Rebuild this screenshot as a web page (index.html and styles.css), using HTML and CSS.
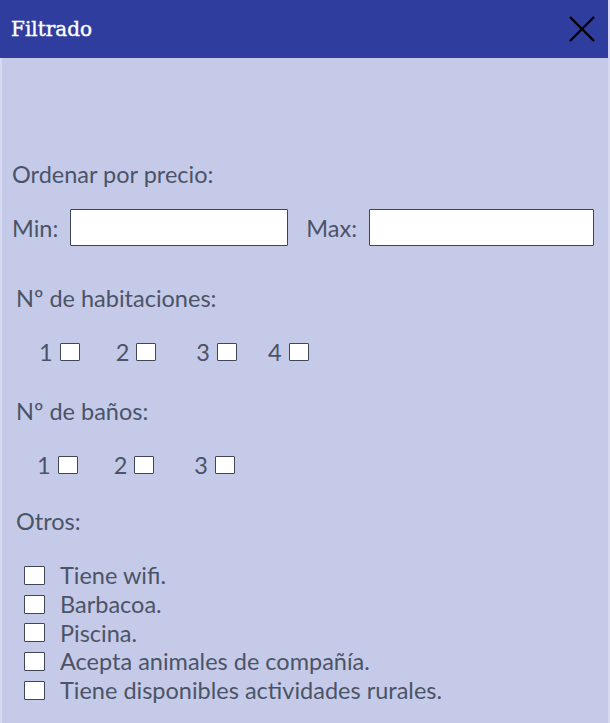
FILE: index.html
```html
<!DOCTYPE html>
<html lang="es">
<head>
    <meta charset="UTF-8">
    <meta name="viewport" content="width=device-width, initial-scale=1.0">
    <title>Filtrado</title>
    <link rel="stylesheet" href="styles.css">
</head>
<body>
    <div class="filter-panel">
        <div class="panel-header">
            <h1>Filtrado</h1>
            <button class="close-btn" aria-label="Cerrar">
                <svg width="26" height="26" viewBox="0 0 26 26">
                    <path d="M1 1 L25 25 M25 1 L1 25" stroke="#000" stroke-width="2.4" fill="none"/>
                </svg>
            </button>
        </div>

        <div class="panel-body">
            <p class="section-title">Ordenar por precio:</p>
            <div class="price-row">
                <label for="min-price">Min:</label>
                <input type="text" id="min-price" class="price-input min">
                <label for="max-price" class="max-label">Max:</label>
                <input type="text" id="max-price" class="price-input max">
            </div>

            <p class="section-title indent rooms-title">Nº de habitaciones:</p>
            <div class="num-row rooms">
                <label class="num-option">1<input type="checkbox"></label>
                <label class="num-option">2<input type="checkbox"></label>
                <label class="num-option">3<input type="checkbox"></label>
                <label class="num-option">4<input type="checkbox"></label>
            </div>

            <p class="section-title indent baths-title">Nº de baños:</p>
            <div class="num-row baths">
                <label class="num-option">1<input type="checkbox"></label>
                <label class="num-option">2<input type="checkbox"></label>
                <label class="num-option">3<input type="checkbox"></label>
            </div>

            <p class="section-title indent others-title">Otros:</p>
            <ul class="others-list">
                <li><label><input type="checkbox"> Tiene wifi.</label></li>
                <li><label><input type="checkbox"> Barbacoa.</label></li>
                <li><label><input type="checkbox"> Piscina.</label></li>
                <li><label><input type="checkbox"> Acepta animales de compañía.</label></li>
                <li><label><input type="checkbox"> Tiene disponibles actividades rurales.</label></li>
            </ul>
        </div>
    </div>
</body>
</html>
```

FILE: styles.css
```css
html {
    background: #d6d9ef;
}
body {
    margin: 0;
    padding: 0;
    font-family: Lato, "Open Sans", sans-serif;
    color: #4b5466;
}
.filter-panel {
    width: 608px;
    height: 723px;
    display: flex;
    flex-direction: column;
}
.panel-header {
    height: 58px;
    background: #2f3d9f;
    display: flex;
    align-items: center;
    justify-content: space-between;
    padding: 0 13px 0 11px;
}
.panel-header h1 {
    margin: 0;
    font-family: "DejaVu Serif", serif;
    font-size: 20px;
    font-weight: normal;
    color: white;
    -webkit-text-stroke: 0.4px white;
}
.close-btn {
    background: none;
    border: none;
    padding: 0;
    width: 26px;
    height: 26px;
    cursor: pointer;
    display: flex;
}
.panel-body {
    flex: 1;
    background: #c5cae9;
    border-left: 2px solid #d6d9ef;
    padding: 102px 0 0 10px;
    font-size: 23.5px;
}
.section-title {
    margin: 0;
    line-height: 28px;
}
.section-title.indent {
    padding-left: 4px;
}
.price-row {
    display: flex;
    align-items: center;
    margin-top: 21px;
}
.price-input {
    height: 37px;
    box-sizing: border-box;
    border: 1px solid #3d4452;
    border-radius: 1px;
    background: white;
    margin: 0 0 0 12px;
    padding: 0 6px;
    font-size: 16px;
}
.price-input.min {
    width: 218px;
}
.price-input.max {
    width: 225px;
}
.max-label {
    margin-left: 18px;
}
.rooms-title {
    margin-top: 38px;
}
.baths-title {
    margin-top: 31px;
}
.others-title {
    margin-top: 28px;
}
.num-row {
    display: flex;
    gap: 36px;
    margin-top: 26px;
    line-height: 28px;
}
.num-row.rooms {
    padding-left: 27px;
}
.num-row.baths {
    padding-left: 25px;
}
.num-option {
    display: flex;
    align-items: center;
}
.num-option:nth-child(3) {
    margin-left: 4px;
}
.num-option:nth-child(4) {
    margin-left: -5px;
}
input[type="checkbox"] {
    appearance: none;
    -webkit-appearance: none;
    width: 20px;
    height: 18px;
    margin: 0 0 0 7px;
    border: 1px solid #3f4757;
    border-radius: 1px;
    background: white;
    box-sizing: border-box;
}
.others-list {
    list-style: none;
    margin: 26px 0 0 0;
    padding: 0 0 0 12px;
    line-height: 28.75px;
}
.others-list label {
    display: flex;
    align-items: center;
    gap: 15px;
}
.others-list input[type="checkbox"] {
    width: 21px;
    height: 19px;
    margin: 0;
}
```
